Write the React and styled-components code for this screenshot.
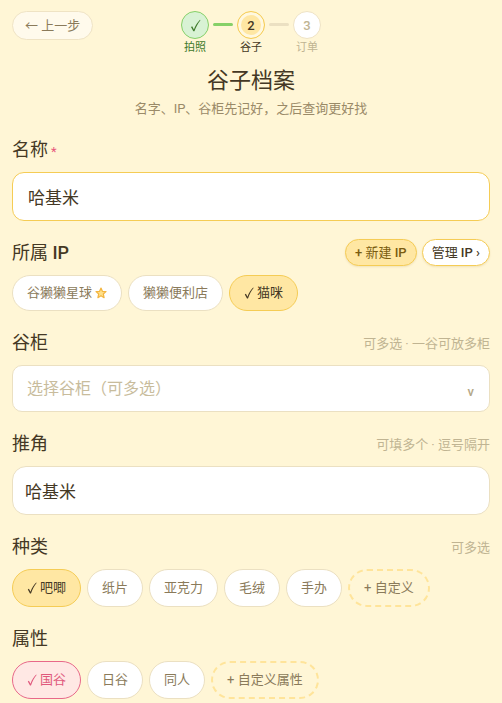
import { useState } from "react";
import styled, { createGlobalStyle } from "styled-components";

const GlobalStyle = createGlobalStyle`
  *{
    box-sizing: border-box;
  }

  body{
    margin: 0;
    background-color: #fff6d6;
    color: #443824;
    font-family: Roboto, "Noto Sans CJK SC", sans-serif;
  }

  button, input, select{
    margin: 0;
    font-family: inherit;
    color: inherit;
  }
`;

const kinds = ["吧唧", "纸片", "亚克力", "毛绒", "手办"];
const attributes = ["国谷", "日谷", "同人"];
const ips = ["谷獭獭星球", "獭獭便利店", "猫咪"];

const toggle = (list, item) =>
  list.includes(item) ? list.filter((i) => i !== item) : [...list, item];

const CheckIcon = ({ size = 10 }) => (
  <svg width={size} height={size + 4} viewBox="0 0 10 14" aria-hidden="true">
    <path d="M0.8 8.4 L1.9 7.7 L3.5 10.7 C4.8 7.2 6.6 4.2 9.2 1.6 L9.6 2 C7.2 5 5.4 8.4 4 12.4 L3 12.4 Z" fill="currentColor" />
  </svg>
);

const StarIcon = () => (
  <svg width="12" height="12" viewBox="0 0 12 12" aria-hidden="true">
    <path
      d="M6 1 L7.4 4.3 L11 4.6 L8.3 7 L9.1 10.7 L6 8.8 L2.9 10.7 L3.7 7 L1 4.6 L4.6 4.3 Z"
      fill="#ffe08a"
      stroke="#f3b540"
      strokeWidth="1.2"
      strokeLinejoin="round"
    />
  </svg>
);

const Chips = ({ items, selected, onToggle, size, tone, starred, children }) => (
  <ChipRow>
    {items.map((item) => {
      const active = selected.includes(item);
      return (
        <Chip
          key={item}
          type="button"
          aria-pressed={active}
          $active={active}
          $size={size}
          $tone={tone}
          onClick={() => onToggle(item)}
        >
          {active && <CheckIcon />}
          {item}
          {item === starred && <StarIcon />}
        </Chip>
      );
    })}
    {children}
  </ChipRow>
);

const App = () => {
  const [name, setName] = useState("哈基米");
  const [role, setRole] = useState("哈基米");
  const [ip, setIp] = useState(["猫咪"]);
  const [kind, setKind] = useState(["吧唧"]);
  const [attribute, setAttribute] = useState(["国谷"]);

  return (
    <Page>
      <GlobalStyle />
      <Header>
        <BackButton type="button">← 上一步</BackButton>
        <Steps>
          <Step $state="done">
            <span className="circle">
              <CheckIcon size={11} />
            </span>
            <span className="text">拍照</span>
          </Step>
          <StepLine $done />
          <Step $state="current" aria-current="step">
            <span className="circle">2</span>
            <span className="text">谷子</span>
          </Step>
          <StepLine />
          <Step $state="todo">
            <span className="circle">3</span>
            <span className="text">订单</span>
          </Step>
        </Steps>
      </Header>

      <Intro>
        <h1>谷子档案</h1>
        <p>名字、IP、谷柜先记好，之后查询更好找</p>
      </Intro>

      <Form onSubmit={(e) => e.preventDefault()}>
        <Field>
          <FieldHead>
            <label htmlFor="name">
              名称<Required>*</Required>
            </label>
          </FieldHead>
          <TextInput id="name" $focus value={name} onChange={(e) => setName(e.target.value)} />
        </Field>

        <Field role="group" aria-labelledby="ip-title">
          <FieldHead>
            <h2 id="ip-title">
              所属 <Latin>IP</Latin>
            </h2>
            <Actions>
              <ActionButton type="button" $filled>
                <Latin>+</Latin> 新建 <Latin>IP</Latin>
              </ActionButton>
              <ActionButton type="button">
                管理 <Latin>IP ›</Latin>
              </ActionButton>
            </Actions>
          </FieldHead>
          <Chips
            items={ips}
            selected={ip}
            starred="谷獭獭星球"
            size="small"
            onToggle={(item) => setIp([item])}
          />
        </Field>

        <Field>
          <FieldHead>
            <label htmlFor="cabinet">谷柜</label>
            <Hint>可多选 · 一谷可放多柜</Hint>
          </FieldHead>
          <SelectBox>
            <select id="cabinet" defaultValue="">
              <option value="">选择谷柜（可多选）</option>
            </select>
            <span className="arrow" aria-hidden="true">
              v
            </span>
          </SelectBox>
        </Field>

        <Field>
          <FieldHead>
            <label htmlFor="role">推角</label>
            <Hint>可填多个 · 逗号隔开</Hint>
          </FieldHead>
          <TextInput id="role" value={role} onChange={(e) => setRole(e.target.value)} />
        </Field>

        <Field role="group" aria-labelledby="kind-title">
          <FieldHead>
            <h2 id="kind-title">种类</h2>
            <Hint>可多选</Hint>
          </FieldHead>
          <Chips items={kinds} selected={kind} onToggle={(item) => setKind(toggle(kind, item))}>
            <AddChip type="button">+ 自定义</AddChip>
          </Chips>
        </Field>

        <Field role="group" aria-labelledby="attribute-title">
          <FieldHead>
            <h2 id="attribute-title">属性</h2>
          </FieldHead>
          <Chips
            items={attributes}
            selected={attribute}
            tone="pink"
            onToggle={(item) => setAttribute(toggle(attribute, item))}
          >
            <AddChip type="button">+ 自定义属性</AddChip>
          </Chips>
        </Field>
      </Form>
    </Page>
  );
};

export default App;

const chipTones = {
  gold: { background: "#ffe7a3", border: "#f5cc55", color: "#443824" },
  pink: { background: "#ffe8e4", border: "#e8688a", color: "#e0587c" },
};

const stepStates = {
  done: { background: "#d8f2d4", border: "#86d068", color: "#3f7a2c" },
  current: { background: "#ffe7a3", border: "#f5cc55", color: "#443824" },
  todo: { background: "#ffffff", border: "#efe3c4", color: "#c0b492" },
};

const Page = styled.main`
  padding: 11px 12px 4px;
`;

const Header = styled.header`
  display: grid;
  grid-template-columns: 1fr auto 1fr;
  align-items: start;
`;

const BackButton = styled.button`
  justify-self: start;
  height: 29px;
  padding: 0 12px;
  border: 1px solid #efe3c4;
  border-radius: 15px;
  background-color: #fffaec;
  color: #8a7a5a;
  font-size: 13px;
  line-height: 18px;
`;

const Steps = styled.div`
  display: flex;
  gap: 4px;
`;

const Step = styled.div`
  display: flex;
  flex-direction: column;
  align-items: center;
  gap: 2px;

  .circle{
    display: flex;
    align-items: center;
    justify-content: center;
    width: 28px;
    height: 28px;
    border: 1px solid ${({ $state }) => stepStates[$state].border};
    border-radius: 50%;
    background-color: ${({ $state }) => stepStates[$state].background};
    box-shadow: ${({ $state }) => ($state === "current" ? "inset 0 0 0 3px #fff8e0" : "none")};
    color: ${({ $state }) => stepStates[$state].color};
    font-size: 13px;
    font-weight: 500;
  }

  .text{
    color: ${({ $state }) => stepStates[$state].color};
    font-size: 11px;
    line-height: 14px;
  }
`;

const StepLine = styled.span`
  width: 20px;
  height: 3px;
  margin-top: 12px;
  border-radius: 2px;
  background-color: ${({ $done }) => ($done ? "#86d068" : "#ebe0c2")};
`;

const Intro = styled.div`
  margin-top: 10px;
  text-align: center;

  h1{
    margin: 0;
    color: #443824;
    font-size: 22px;
    font-weight: 400;
    line-height: 32px;
  }

  p{
    margin: 2px 0 0;
    color: #9a8a68;
    font-size: 13px;
    line-height: 20px;
  }
`;

const Form = styled.form`
  display: flex;
  flex-direction: column;
  gap: 18px;
  margin-top: 17px;
`;

const Field = styled.div`
  display: flex;
  flex-direction: column;
  gap: 9px;
`;

const FieldHead = styled.div`
  display: flex;
  align-items: center;
  justify-content: space-between;
  height: 27px;

  label, h2{
    margin: 0;
    font-size: 18px;
    font-weight: 400;
    line-height: 27px;
  }
`;

const Latin = styled.span`
  font-weight: 500;
`;

const Required = styled.span`
  margin-left: 3px;
  color: #e8587c;
  font-size: 13px;
  line-height: 1;
`;

const Hint = styled.span`
  color: #c0b492;
  font-size: 13px;
`;

const TextInput = styled.input`
  width: 100%;
  height: 49px;
  padding: 0 ${({ $focus }) => ($focus ? 15 : 12)}px;
  border: 1px solid ${({ $focus }) => ($focus ? "#f5cc55" : "#ebe0c2")};
  border-radius: ${({ $focus }) => ($focus ? 12 : 14)}px;
  outline: none;
  background-color: #ffffff;
  font-size: 17px;
`;

const SelectBox = styled.div`
  display: grid;
  align-items: center;

  select, .arrow{
    grid-area: 1 / 1;
  }

  select{
    width: 100%;
    height: 47px;
    padding: 0 14px;
    border: 1px solid #ebe0c2;
    border-radius: 10px;
    outline: none;
    appearance: none;
    background-color: #ffffff;
    color: #c8bc9c;
    font-size: 16px;
  }

  .arrow{
    justify-self: end;
    margin: 6px 16px 0 0;
    color: #b5a888;
    font-size: 13px;
    font-weight: 500;
    pointer-events: none;
  }
`;

const Actions = styled.div`
  display: flex;
  gap: 5px;
`;

const ActionButton = styled.button`
  height: 27px;
  padding: 0 9px;
  border: 1px solid #f5cc55;
  border-radius: 14px;
  background-color: ${({ $filled }) => ($filled ? "#ffe7a3" : "#ffffff")};
  box-shadow: 0 1px 2px rgba(160, 120, 20, .15);
  color: ${({ $filled }) => ($filled ? "#7a5c10" : "#443824")};
  font-size: 13px;
  font-weight: 400;
  line-height: 18px;
`;

const ChipRow = styled.div`
  display: flex;
  flex-wrap: wrap;
  gap: 6px;
`;

const Chip = styled.button`
  display: flex;
  align-items: center;
  gap: 3px;
  height: ${({ $size }) => ($size === "small" ? 36 : 38)}px;
  padding: 0 14px;
  border: 1px solid #ebe0c2;
  border-radius: 19px;
  background-color: #ffffff;
  color: #8a7a5a;
  font-size: 13px;
  line-height: 18px;

  ${({ $active, $tone = "gold" }) =>
    $active &&
    `
    border-color: ${chipTones[$tone].border};
    background-color: ${chipTones[$tone].background};
    color: ${chipTones[$tone].color};
  `}
`;

const AddChip = styled.button`
  height: 38px;
  padding: 0 14px;
  border: 2px dashed #ffe49a;
  border-radius: 19px;
  background-color: transparent;
  color: #8a7a5a;
  font-size: 13px;
  line-height: 18px;
`;
